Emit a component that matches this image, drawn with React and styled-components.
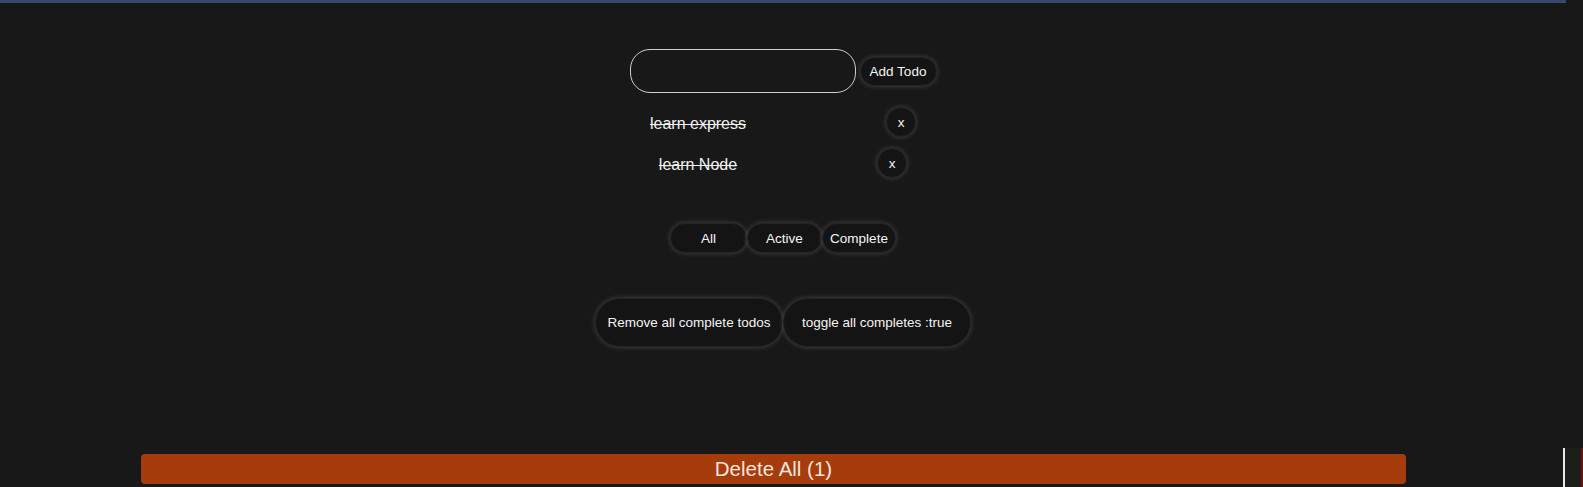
import React from 'react'
import styled, { createGlobalStyle } from 'styled-components'

const GlobalStyle = createGlobalStyle`
  html, body {
    margin: 0;
    padding: 0;
    background: #181818;
    font-family: "Liberation Sans", Arial, sans-serif;
    overflow: hidden;
  }
`

const Page = styled.div`
  height: 487px;
  width: 1566px;
  border-top: 3px solid #34496b;
  box-sizing: border-box;
  display: flex;
  flex-direction: column;
  align-items: center;
`

const Form = styled.div`
  margin-top: 46px;
  display: flex;
  align-items: center;
  gap: 4px;
`

const Input = styled.input`
  width: 226px;
  height: 44px;
  box-sizing: border-box;
  border: 1px solid #cfcfcf;
  border-radius: 20px;
  background: transparent;
  outline: none;
  color: #fff;
`

const PillButton = styled.button`
  width: ${p => p.$w}px;
  height: ${p => p.$h}px;
  box-sizing: border-box;
  padding: 0;
  border: 1px solid #242424;
  border-radius: ${p => p.$h / 2}px;
  background: #141414;
  color: #f4f4f4;
  font-family: "Liberation Sans", Arial, sans-serif;
  font-size: 13.5px;
  box-shadow: 0 0 4px 1px rgba(140, 140, 140, 0.28);
  cursor: pointer;
`

const List = styled.ul`
  list-style: none;
  margin: 14px 0 0;
  padding: 0;
  display: flex;
  flex-direction: column;
  align-items: center;
  gap: 11px;
`

const Item = styled.li`
  display: flex;
  align-items: center;
  gap: 140px;
`

const TodoText = styled.span`
  font-size: 16px;
  color: #f0f0f0;
  text-decoration: line-through;
  padding-top: 3px;
`

const Filters = styled.div`
  margin-top: 45px;
  display: flex;
`

const Actions = styled.div`
  margin-top: 45px;
  display: flex;
`

const DeleteBar = styled.button`
  margin-top: 107px;
  align-self: flex-start;
  margin-left: 141px;
  width: 1265px;
  height: 30px;
  border: none;
  border-radius: 4px;
  background: #a63c0c;
  color: #f3e6dc;
  font-family: "Liberation Sans", Arial, sans-serif;
  font-size: 20.5px;
  padding: 0;
`

const Corner = styled.div`
  position: fixed;
  left: 1563px;
  top: 448px;
  width: 20px;
  height: 39px;
  border-left: 2px solid #e8e8e8;
  background: linear-gradient(90deg, #1a1f1a 80%, #6a1010 80%);
`

const todos = ['learn express', 'learn Node']

export default function App() {
  return (
    <>
      <GlobalStyle />
      <Page>
        <Form>
          <Input />
          <PillButton $w={77} $h={29}>Add Todo</PillButton>
        </Form>
        <List>
          {todos.map(t => (
            <Item key={t}>
              <TodoText>{t}</TodoText>
              <PillButton $w={30} $h={30}>x</PillButton>
            </Item>
          ))}
        </List>
        <Filters>
          <PillButton $w={77} $h={30}>All</PillButton>
          <PillButton $w={75} $h={30}>Active</PillButton>
          <PillButton $w={74} $h={30}>Complete</PillButton>
        </Filters>
        <Actions>
          <PillButton $w={188} $h={49}>Remove all complete todos</PillButton>
          <PillButton $w={188} $h={49}>toggle all completes :true</PillButton>
        </Actions>
        <DeleteBar>Delete All (1)</DeleteBar>
      </Page>
      <Corner />
    </>
  )
}
